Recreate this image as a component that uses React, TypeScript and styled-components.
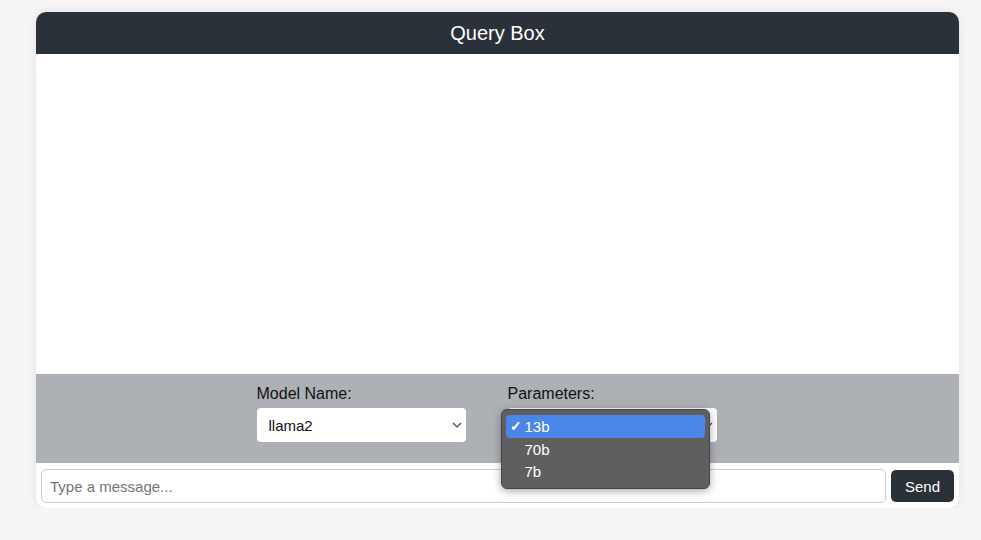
import * as React from "react";
import styled, { createGlobalStyle } from "styled-components";

const GlobalStyle = createGlobalStyle`
  html, body {
    margin: 0;
    padding: 0;
    background: #f5f5f5;
    font-family: "Liberation Sans", Arial, sans-serif;
  }
`;

const Page = styled.div`
  padding: 12px 22px 0 36px;
  width: 981px;
  box-sizing: border-box;
`;

const Card = styled.div`
  width: 923px;
  background: white;
  border-radius: 10px;
  box-shadow: 0 0 10px rgba(0, 0, 0, 0.08);
  display: flex;
  flex-direction: column;
`;

const Header = styled.div`
  height: 42px;
  background: #2b3138;
  color: white;
  border-radius: 10px 10px 0 0;
  display: flex;
  align-items: center;
  justify-content: center;
  font-size: 20px;
`;

const ChatArea = styled.div`
  height: 320px;
  background: white;
`;

const Controls = styled.div`
  height: 89px;
  background: #adb1b5;
  display: flex;
  justify-content: center;
  gap: 42px;
  padding-right: 22px;
  box-sizing: border-box;
  padding-top: 10px;
`;

const Field = styled.div`
  display: flex;
  flex-direction: column;
  width: 209px;
  position: relative;
`;

const Label = styled.label`
  font-size: 16px;
  color: #111;
  height: 24px;
  line-height: 20px;
`;

const SelectBox = styled.div`
  height: 34px;
  background: white;
  border-radius: 4px;
  display: flex;
  align-items: center;
  justify-content: space-between;
  padding: 0 4px 0 12px;
  box-sizing: border-box;
  font-size: 15px;
  color: #111;
`;

const Menu = styled.div`
  position: absolute;
  left: -7px;
  top: 25px;
  width: 209px;
  height: 80px;
  background: #5f5f5f;
  border: 1px solid #444;
  border-radius: 6px;
  box-shadow: 0 2px 8px rgba(0, 0, 0, 0.35);
  box-sizing: border-box;
  padding: 5px 4px;
  display: flex;
  flex-direction: column;
`;

const MenuItem = styled.div<{ $active?: boolean }>`
  height: 23px;
  border-radius: 4px;
  background: ${({ $active }) => ($active ? "#4a86e8" : "transparent")};
  color: white;
  font-size: 15px;
  display: flex;
  align-items: center;
  padding-left: 4px;
`;

const Check = styled.span`
  width: 15px;
  font-size: 14px;
  font-weight: bold;
`;

const InputRow = styled.div`
  display: flex;
  align-items: center;
  gap: 5px;
  padding: 6px 5px 5px 5px;
`;

const MessageInput = styled.input`
  flex: 1;
  height: 34px;
  box-sizing: border-box;
  border: 1px solid #ccc;
  border-radius: 5px;
  padding: 0 8px;
  font-size: 15px;
  font-family: "Liberation Sans", Arial, sans-serif;
  &::placeholder {
    color: #757575;
  }
`;

const SendButton = styled.button`
  width: 63px;
  height: 32px;
  background: #2b3138;
  color: white;
  border: none;
  border-radius: 5px;
  font-size: 15px;
  font-family: "Liberation Sans", Arial, sans-serif;
`;

function Chevron() {
  return (
    <svg width="10" height="6" viewBox="0 0 10 6" fill="none">
      <path d="M1 1l4 4 4-4" stroke="#444" strokeWidth="1.2" />
    </svg>
  );
}

export default function App() {
  return (
    <>
      <GlobalStyle />
      <Page>
        <Card>
          <Header>Query Box</Header>
          <ChatArea />
          <Controls>
            <Field>
              <Label>Model Name:</Label>
              <SelectBox>
                <span>llama2</span>
                <Chevron />
              </SelectBox>
            </Field>
            <Field>
              <Label>Parameters:</Label>
              <SelectBox>
                <span />
                <Chevron />
              </SelectBox>
              <Menu>
                <MenuItem $active>
                  <Check>✓</Check>13b
                </MenuItem>
                <MenuItem>
                  <Check />70b
                </MenuItem>
                <MenuItem>
                  <Check />7b
                </MenuItem>
              </Menu>
            </Field>
          </Controls>
          <InputRow>
            <MessageInput placeholder="Type a message..." />
            <SendButton>Send</SendButton>
          </InputRow>
        </Card>
      </Page>
    </>
  );
}
